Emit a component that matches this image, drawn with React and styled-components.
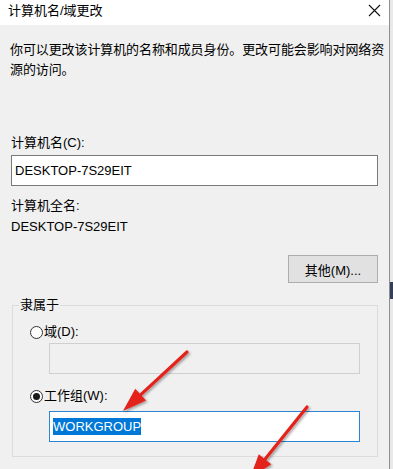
import React from "react";
import styled, { createGlobalStyle } from "styled-components";

const GlobalStyle = createGlobalStyle`
  html, body { margin: 0; padding: 0; background: #f0f0f0; }
  body { font-family: "Liberation Sans", "Noto Sans CJK SC", sans-serif; color: #000; }
`;

const Screen = styled.div`
  position: relative;
  width: 393px;
  height: 469px;
  display: flex;
  overflow: hidden;
`;

const Dialog = styled.div`
  width: 389px;
  border-right: 1px solid #8f8f8f;
  display: flex;
  flex-direction: column;
  background: #f0f0f0;
`;

const EdgeStrip = styled.div`
  flex: 1;
  background: linear-gradient(to bottom, #e9e9e9 0, #e9e9e9 282px, #34405a 282px, #34405a 299px, #e9e9e9 299px);
`;

const TitleBar = styled.div`
  height: 25px;
  box-sizing: border-box;
  background: #fff;
  display: flex;
  justify-content: space-between;
  align-items: flex-start;
  padding: 2px 8px 0 8px;
`;

const Title = styled.div`
  font-size: 13px;
  line-height: 17px;
`;

const CloseIcon = styled.svg`
  width: 13px;
  height: 13px;
  margin-top: 2px;
`;

const Body = styled.div`
  display: flex;
  flex-direction: column;
  padding: 0 11px;
`;

const Description = styled.div`
  width: 380px;
  margin: 15px 0 0 -1px;
  font-size: 13px;
  line-height: 20px;
  letter-spacing: -0.1px;
`;

const Label = styled.div`
  font-size: 13px;
  line-height: 18px;
  margin-top: ${(p) => p.$mt || 0}px;
`;

const TextBox = styled.div`
  height: 31px;
  box-sizing: border-box;
  margin-top: ${(p) => p.$mt || 0}px;
  margin-left: ${(p) => p.$ml || 0}px;
  border: 1px solid
    ${(p) => (p.$focused ? "#2b84d4" : p.$disabled ? "#cfcfcf" : "#7a7a7a")};
  background: ${(p) => (p.$disabled ? "#f0f0f0" : "#fff")};
  display: flex;
  align-items: center;
  padding-left: 3px;
  font-size: 13px;
`;

const Selected = styled.span`
  background: #0078d7;
  color: #fff;
  line-height: 17px;
`;

const Button = styled.div`
  align-self: flex-end;
  width: 90px;
  height: 28px;
  box-sizing: border-box;
  margin-top: 19px;
  background: #e1e1e1;
  border: 1px solid #adadad;
  display: flex;
  align-items: center;
  justify-content: center;
  font-size: 13px;
`;

const Group = styled.fieldset`
  margin: 13px 0 0 1px;
  padding: 0 17px 14px 17px;
  min-width: 0;
  border: 1px solid #dcdcdc;
  display: flex;
  flex-direction: column;
`;

const Legend = styled.legend`
  margin-left: -11px;
  padding: 0 1px;
  font-size: 13px;
  line-height: 18px;
`;

const RadioRow = styled.div`
  display: flex;
  align-items: center;
  gap: 1px;
  font-size: 13px;
  line-height: 18px;
  margin-top: ${(p) => p.$mt || 0}px;
`;

const RadioCircle = styled.span`
  width: 13px;
  height: 13px;
  box-sizing: border-box;
  border-radius: 50%;
  border: 1px solid #333;
  background: #fff;
  display: flex;
  align-items: center;
  justify-content: center;
  &::after {
    content: "";
    width: 7px;
    height: 7px;
    border-radius: 50%;
    background: ${(p) => (p.$checked ? "#1a1a1a" : "transparent")};
  }
`;

const Overlay = styled.svg`
  position: absolute;
  left: 0;
  top: 0;
  width: 393px;
  height: 469px;
  pointer-events: none;
`;

function Arrow({ x1, y1, x2, y2 }) {
  const dx = x2 - x1;
  const dy = y2 - y1;
  const len = Math.hypot(dx, dy);
  const ux = dx / len;
  const uy = dy / len;
  const nx = -uy;
  const ny = ux;
  const head = 24;
  const half = 8;
  const bx = x2 - ux * head;
  const by = y2 - uy * head;
  const pts = `${x2},${y2} ${bx + nx * half},${by + ny * half} ${bx - nx * half},${by - ny * half}`;
  return (
    <g filter="url(#shadow)">
      <line x1={x1} y1={y1} x2={bx + ux * 2} y2={by + uy * 2} stroke="#e3231c" strokeWidth="3.2" strokeLinecap="round" />
      <polygon points={pts} fill="#e3231c" />
    </g>
  );
}

export default function App() {
  return (
    <>
      <GlobalStyle />
      <Screen>
        <Dialog>
          <TitleBar>
            <Title>计算机名/域更改</Title>
            <CloseIcon viewBox="0 0 13 13">
              <path d="M1 1 L12 12 M12 1 L1 12" stroke="#111" strokeWidth="1.1" fill="none" />
            </CloseIcon>
          </TitleBar>
          <Body>
            <Description>
              你可以更改该计算机的名称和成员身份。更改可能会影响对网络资源的访问。
            </Description>
            <Label $mt={54}>计算机名(C):</Label>
            <TextBox $mt={3}>DESKTOP-7S29EIT</TextBox>
            <Label $mt={11}>计算机全名:</Label>
            <Label $mt={3}>DESKTOP-7S29EIT</Label>
            <Button>其他(M)...</Button>
            <Group>
              <Legend>隶属于</Legend>
              <RadioRow $mt={9}>
                <RadioCircle />
                <span>域(D):</span>
              </RadioRow>
              <TextBox $mt={2} $ml={19} $disabled />
              <RadioRow $mt={13}>
                <RadioCircle $checked />
                <span>工作组(W):</span>
              </RadioRow>
              <TextBox $mt={6} $ml={19} $focused>
                <Selected>WORKGROUP</Selected>
              </TextBox>
            </Group>
          </Body>
        </Dialog>
        <EdgeStrip />
        <Overlay viewBox="0 0 393 469">
          <defs>
            <filter id="shadow" x="-20%" y="-20%" width="140%" height="140%">
              <feDropShadow dx="1.5" dy="1.5" stdDeviation="1.2" floodColor="#000" floodOpacity="0.35" />
            </filter>
          </defs>
          <Arrow x1={187} y1={352} x2={123} y2={411} />
          <Arrow x1={307} y1={407} x2={250} y2={478} />
        </Overlay>
      </Screen>
    </>
  );
}
